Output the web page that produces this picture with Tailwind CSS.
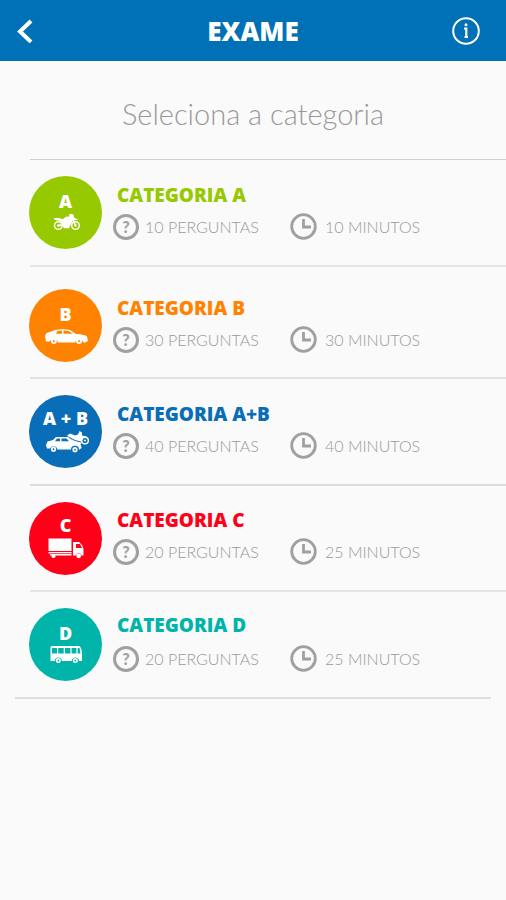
<!DOCTYPE html>
<html lang="pt">
<head>
<meta charset="utf-8">
<meta name="viewport" content="width=device-width, initial-scale=1">
<title>Exame</title>
<script src="https://cdn.jsdelivr.net/npm/@tailwindcss/browser@4"></script>
</head>
<body class="min-h-screen bg-[#fafafa] font-['Lato',sans-serif]">
<svg class="hidden" aria-hidden="true">
  <symbol id="clock" viewBox="0 0 27 27"><circle cx="13.5" cy="13.5" r="11.8" fill="none" stroke="currentColor" stroke-width="2.8"/><path d="M13.5 6V14H21" fill="none" stroke="currentColor" stroke-width="2.8"/></symbol>
</svg>

<header class="flex h-[61px] items-center justify-between bg-[#0071b7] pr-[26px] pl-4 text-white">
  <button type="button" aria-label="Voltar" class="flex w-[38px]">
    <svg class="h-[24px] w-[18px]" viewBox="0 0 18 24" fill="none" stroke="currentColor" stroke-width="4"><path d="M15 2 4 12.500 15 23"/></svg>
  </button>
  <h1 class="font-['Open_Sans',sans-serif] text-[26px] leading-[28px] font-extrabold">EXAME</h1>
  <button type="button" aria-label="Informação" class="flex">
    <svg class="size-[28px]" viewBox="0 0 28 28" fill="none" stroke="currentColor" stroke-width="2"><circle cx="14" cy="14" r="12.800"/><path d="M12 11.500H14.300V20.500M12.500 20H16" stroke-width="2.200"/><circle cx="14" cy="7.800" r="1.500" fill="currentColor" stroke="none"/></svg>
  </button>
</header>

<main>
  <h2 class="pt-[35px] pb-[27px] text-center text-[29px] leading-[36px] font-light text-[#999]">Seleciona a categoria</h2>

  <ul>
    <li class="ml-[30px] border-t border-b-2 border-t-[#cfcfcf] border-b-[#e6e6e6]">
      <a href="#a" class="-ml-px flex gap-[11px] py-4">
        <span class="flex size-[73px] shrink-0 flex-col items-center rounded-full bg-[#97c900] pt-[15px] text-white">
          <span class="font-['Open_Sans',sans-serif] text-[18px] leading-[20px] font-extrabold">A</span>
          <svg class="h-[24px] w-[48px]" viewBox="0 0 48 24" fill="currentColor"><g fill="none" stroke="currentColor" stroke-width="1.400"><circle cx="16.300" cy="14.500" r="3.800"/><circle cx="33.500" cy="14.500" r="3.800"/><path d="M29.500 5 33.500 14.500"/></g><circle cx="16.300" cy="14.500" r="1.200"/><circle cx="33.500" cy="14.500" r="1.200"/><path d="M11.500 7 17 7 20.500 8.300 24 5.800 28 5.300 26.500 4 29 2.800 31.500 3.500 32 6.500 36.500 8.800 31 9.200 29 13 27 17.300H22L20.500 15 16 15.200V13.800L20 13 18 10 13 9Z"/></svg>
        </span>
        <span class="flex flex-col gap-[6px] pt-[7px]">
          <strong class="pl-1 font-['Open_Sans',sans-serif] text-[19px] leading-[24px] font-extrabold text-[#97c900]">CATEGORIA A</strong>
          <span class="flex items-center text-[16px] leading-[27px] font-light text-[#999]">
            <span class="flex w-[177px] items-center gap-[6px]"><span class="flex size-[26px] items-center justify-center rounded-full border-[3px] border-[#a0a0a0] text-[16px] leading-[20px] font-black text-[#a0a0a0]">?</span>10 PERGUNTAS</span>
            <svg class="mr-2 size-[27px] text-[#a0a0a0]"><use href="#clock"/></svg>10 MINUTOS
          </span>
        </span>
      </a>
    </li>

    <li class="ml-[30px] border-b-2 border-[#e2e2e2]">
      <a href="#b" class="-ml-px flex gap-[11px] pt-[22px] pb-[15px]">
        <span class="flex size-[73px] shrink-0 flex-col items-center rounded-full bg-[#ff8300] pt-[15px] text-white">
          <span class="font-['Open_Sans',sans-serif] text-[18px] leading-[20px] font-extrabold">B</span>
          <svg class="h-[24px] w-[48px]" viewBox="0 0 48 24" fill="currentColor"><path fill-rule="evenodd" d="M3 12 4.500 9Q9 8 13 6 21 4.300 28 6L34 10Q43 10.500 45 12.500L46 17 43 18.500H41.500A4.500 4.500 0 0 0 33 18.500H16A4.500 4.500 0 0 0 7.500 17.500L4 17.500ZM14 9.800H20V6.500L15.500 7ZM21.500 6.500V9.800H31L26.500 7Z"/><circle cx="11.800" cy="17" r="3"/><circle cx="37" cy="17" r="3"/><circle cx="11.800" cy="17" r="1" fill="#ff8300"/><circle cx="37" cy="17" r="1" fill="#ff8300"/></svg>
        </span>
        <span class="flex flex-col gap-[6px] pt-[7px]">
          <strong class="pl-1 font-['Open_Sans',sans-serif] text-[19px] leading-[24px] font-extrabold text-[#ff8300]">CATEGORIA B</strong>
          <span class="flex items-center text-[16px] leading-[27px] font-light text-[#999]">
            <span class="flex w-[177px] items-center gap-[6px]"><span class="flex size-[26px] items-center justify-center rounded-full border-[3px] border-[#a0a0a0] text-[16px] leading-[20px] font-black text-[#a0a0a0]">?</span>30 PERGUNTAS</span>
            <svg class="mr-2 size-[27px] text-[#a0a0a0]"><use href="#clock"/></svg>30 MINUTOS
          </span>
        </span>
      </a>
    </li>

    <li class="ml-[30px] border-b-2 border-[#dcdcdc]">
      <a href="#ab" class="-ml-px flex gap-[11px] py-4">
        <span class="flex size-[73px] shrink-0 flex-col items-center rounded-full bg-[#0a6db7] pt-[13px] text-white">
          <span class="font-['Open_Sans',sans-serif] text-[18px] leading-[20px] font-extrabold">A + B</span>
          <svg class="mt-[2px] h-[24px] w-[48px]" viewBox="0 0 48 24" fill="currentColor"><circle cx="43" cy="10.500" r="3.300" fill="none" stroke="currentColor" stroke-width="1.400"/><circle cx="43" cy="10.500" r="1"/><path d="M25 5.500 28 3.500 33 5.500 36 4.500 37.500 1 40 2.500 40 5.500 45 6.500 41 8 39 14H33L29 9Z"/><path d="M27.500 7.500 33 10.500 39 12" fill="none" stroke="#0a6db7" stroke-width="1"/><path fill-rule="evenodd" d="M4 15 5.500 11.500 11 10 14 7H26L31 11 37 12.500 39 15 39.500 18 37 20A4 4 0 0 0 29 19.500H15.500A4 4 0 0 0 8 18.500L5 18.500ZM13 11.300H18V8.500H15ZM19.500 8.500V11.300H27L24.500 8.500Z"/><circle cx="11.500" cy="19.200" r="2.600"/><circle cx="33" cy="19.700" r="2.600"/><circle cx="11.500" cy="19.200" r=".9" fill="#0a6db7"/><circle cx="33" cy="19.700" r=".9" fill="#0a6db7"/></svg>
        </span>
        <span class="flex flex-col gap-[6px] pt-[7px]">
          <strong class="pl-1 font-['Open_Sans',sans-serif] text-[19px] leading-[24px] font-extrabold text-[#0a6db7]">CATEGORIA A+B</strong>
          <span class="flex items-center text-[16px] leading-[27px] font-light text-[#999]">
            <span class="flex w-[177px] items-center gap-[6px]"><span class="flex size-[26px] items-center justify-center rounded-full border-[3px] border-[#a0a0a0] text-[16px] leading-[20px] font-black text-[#a0a0a0]">?</span>40 PERGUNTAS</span>
            <svg class="mr-2 size-[27px] text-[#a0a0a0]"><use href="#clock"/></svg>40 MINUTOS
          </span>
        </span>
      </a>
    </li>

    <li class="ml-[30px] border-b-2 border-[#e6e6e6]">
      <a href="#c" class="-ml-px flex gap-[11px] pt-4 pb-[15px]">
        <span class="flex size-[73px] shrink-0 flex-col items-center rounded-full bg-[#ff0019] pt-[13px] text-white">
          <span class="font-['Open_Sans',sans-serif] text-[18px] leading-[20px] font-extrabold">C</span>
          <svg class="mt-[2px] h-[24px] w-[48px]" viewBox="0 0 48 24" fill="currentColor"><path d="M6.500 1.500H29.500V14H6.500ZM6.500 15H29.500V18.500H14A2.700 2.700 0 0 0 9 18.500H8V16.500H6.500Z"/><path fill-rule="evenodd" d="M31 5H37L40 8 41.500 12V18.500H39.500A2.800 2.800 0 0 0 34 18.500H31ZM34 7V11H40L38 7Z"/><circle cx="11.500" cy="18.800" r="2.200"/><circle cx="36.700" cy="18.800" r="2.400"/><path d="M8 16.500H29.500" stroke="#ff0019" stroke-width=".7"/></svg>
        </span>
        <span class="flex flex-col gap-[6px] pt-[6px]">
          <strong class="pl-1 font-['Open_Sans',sans-serif] text-[19px] leading-[24px] font-extrabold text-[#ff0019]">CATEGORIA C</strong>
          <span class="flex items-center text-[16px] leading-[27px] font-light text-[#999]">
            <span class="flex w-[177px] items-center gap-[6px]"><span class="flex size-[26px] items-center justify-center rounded-full border-[3px] border-[#a0a0a0] text-[16px] leading-[20px] font-black text-[#a0a0a0]">?</span>20 PERGUNTAS</span>
            <svg class="mr-2 size-[27px] text-[#a0a0a0]"><use href="#clock"/></svg>25 MINUTOS
          </span>
        </span>
      </a>
    </li>

    <li class="mr-[15px] ml-[15px] border-b-2 border-[#dedede]">
      <a href="#d" class="ml-[14px] flex gap-[11px] py-4">
        <span class="flex size-[73px] shrink-0 flex-col items-center rounded-full bg-[#00b4aa] pt-[15px] text-white">
          <span class="font-['Open_Sans',sans-serif] text-[18px] leading-[20px] font-extrabold">D</span>
          <svg class="h-[24px] w-[48px]" viewBox="0 0 48 24" fill="currentColor"><path fill-rule="evenodd" d="M10 3H37Q39.500 4 40 10V18H37A3.400 3.400 0 0 0 29.800 18H19.800A3.400 3.400 0 0 0 12.800 18H8.500V5Q8.500 3 10 3ZM10 5V10.500H15V5ZM16.200 5V10.500H21.700V5ZM22.900 5V10.500H28.400V5ZM29.600 5V10.500H34.400V5ZM35.600 5V10.500H38.500L37.500 5Z"/><circle cx="16.300" cy="17.500" r="2.500"/><circle cx="33.300" cy="17.500" r="2.500"/><circle cx="16.300" cy="17.500" r=".9" fill="#00b4aa"/><circle cx="33.300" cy="17.500" r=".9" fill="#00b4aa"/></svg>
        </span>
        <span class="flex flex-col gap-[8px] pt-[5px]">
          <strong class="pl-1 font-['Open_Sans',sans-serif] text-[19px] leading-[24px] font-extrabold text-[#00b4aa]">CATEGORIA D</strong>
          <span class="flex items-center text-[16px] leading-[27px] font-light text-[#999]">
            <span class="flex w-[177px] items-center gap-[6px]"><span class="flex size-[26px] items-center justify-center rounded-full border-[3px] border-[#a0a0a0] text-[16px] leading-[20px] font-black text-[#a0a0a0]">?</span>20 PERGUNTAS</span>
            <svg class="mr-2 size-[27px] text-[#a0a0a0]"><use href="#clock"/></svg>25 MINUTOS
          </span>
        </span>
      </a>
    </li>
  </ul>
</main>
</body>
</html>
